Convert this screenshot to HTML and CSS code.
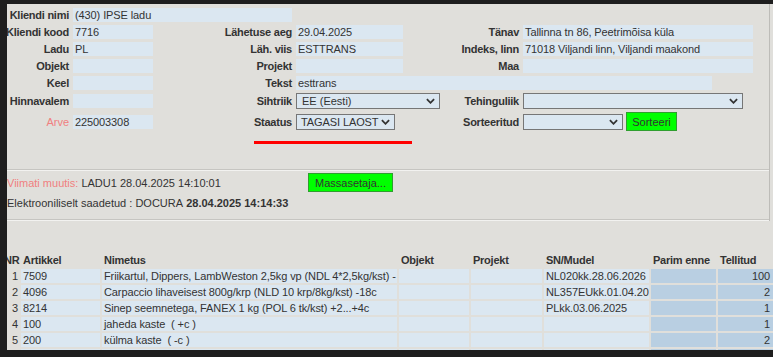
FILE: index.html
```html
<!DOCTYPE html>
<html lang="et">
<head>
  <meta charset="UTF-8" />
  <title>Lähetus</title>
  <link rel="stylesheet" href="styles.css">
</head>
<body>
<div class="screen">
  <div class="doc">
    <div class="head">
      <div class="form">
        <!-- rida 1 -->
        <div class="lbl">Kliendi nimi</div>
        <div class="fld span2">(430) IPSE ladu</div>
        <div class="span3"></div>
        <!-- rida 2 -->
        <div class="lbl">Kliendi kood</div>
        <div class="fld">7716</div>
        <div class="lbl">Lähetuse aeg</div>
        <div class="fld">29.04.2025</div>
        <div class="lbl">Tänav</div>
        <div class="fld">Tallinna tn 86, Peetrimõisa küla</div>
        <!-- rida 3 -->
        <div class="lbl">Ladu</div>
        <div class="fld">PL</div>
        <div class="lbl">Läh. viis</div>
        <div class="fld">ESTTRANS</div>
        <div class="lbl">Indeks, linn</div>
        <div class="fld">71018 Viljandi linn, Viljandi maakond</div>
        <!-- rida 4 -->
        <div class="lbl">Objekt</div>
        <div class="fld"></div>
        <div class="lbl">Projekt</div>
        <div class="fld"></div>
        <div class="lbl">Maa</div>
        <div class="fld"></div>
        <!-- rida 5 -->
        <div class="lbl">Keel</div>
        <div class="fld"></div>
        <div class="lbl">Tekst</div>
        <div class="span3"><div class="fld fld-text">esttrans</div></div>
        <!-- rida 6 -->
        <div class="lbl">Hinnavalem</div>
        <div class="fld"></div>
        <div class="lbl">Sihtriik</div>
        <div class="sel sel-country">EE (Eesti)
          <svg viewBox="0 0 10 6"><polyline points="1,1 5,5 9,1"/></svg>
        </div>
        <div class="lbl">Tehinguliik</div>
        <div class="sel sel-deal">
          <svg viewBox="0 0 10 6"><polyline points="1,1 5,5 9,1"/></svg>
        </div>
        <!-- rida 7 -->
        <div class="lbl lbl-warn">Arve</div>
        <div class="fld">225003308</div>
        <div class="lbl">Staatus</div>
        <div class="sel sel-status">TAGASI LAOST
          <svg viewBox="0 0 10 6"><polyline points="1,1 5,5 9,1"/></svg>
        </div>
        <div class="lbl">Sorteeritud</div>
        <div class="sort">
          <div class="sel sel-sort">
            <svg viewBox="0 0 10 6"><polyline points="1,1 5,5 9,1"/></svg>
          </div>
          <button class="btn btn-sort">Sorteeri</button>
        </div>
      </div>

      <div class="mark"></div>
      <div class="rule"></div>

      <div class="meta-row">
        <div class="meta-text"><span class="warn">Viimati muutis:</span> LADU1 28.04.2025 14:10:01</div>
        <button class="btn btn-mass">Massasetaja...</button>
      </div>
      <div class="meta-row meta-second">
        Elektrooniliselt saadetud : DOCURA&nbsp;<b>28.04.2025 14:14:33</b>
      </div>
      <div class="rule rule-low"></div>
    </div>

    <div class="rows">
      <div class="th nr">NR</div>
      <div class="th">Artikkel</div>
      <div class="th">Nimetus</div>
      <div class="th">Objekt</div>
      <div class="th">Projekt</div>
      <div class="th">SN/Mudel</div>
      <div class="th">Parim enne</div>
      <div class="th">Tellitud</div>

      <div class="nr">1</div>
      <div class="td">7509</div>
      <div class="td">Friikartul, Dippers, LambWeston 2,5kg vp (NDL 4*2,5kg/kst) - 18c</div>
      <div class="td"></div>
      <div class="td"></div>
      <div class="td">NL020kk.28.06.2026</div>
      <div class="td dark"></div>
      <div class="td dark num">100</div>

      <div class="nr">2</div>
      <div class="td">4096</div>
      <div class="td">Carpaccio lihaveisest 800g/krp (NLD 10 krp/8kg/kst) -18c</div>
      <div class="td"></div>
      <div class="td"></div>
      <div class="td">NL357EUkk.01.04.2026</div>
      <div class="td dark"></div>
      <div class="td dark num">2</div>

      <div class="nr">3</div>
      <div class="td">8214</div>
      <div class="td">Sinep seemnetega, FANEX 1 kg (POL 6 tk/kst) +2...+4c</div>
      <div class="td"></div>
      <div class="td"></div>
      <div class="td">PLkk.03.06.2025</div>
      <div class="td dark"></div>
      <div class="td dark num">1</div>

      <div class="nr">4</div>
      <div class="td">100</div>
      <div class="td">jaheda kaste&nbsp; ( +c )</div>
      <div class="td"></div>
      <div class="td"></div>
      <div class="td"></div>
      <div class="td dark"></div>
      <div class="td dark num">1</div>

      <div class="nr">5</div>
      <div class="td">200</div>
      <div class="td">külma kaste&nbsp; ( -c )</div>
      <div class="td"></div>
      <div class="td"></div>
      <div class="td"></div>
      <div class="td dark"></div>
      <div class="td dark num">2</div>

      <div class="nr"></div>
      <div class="td"></div>
      <div class="td"></div>
      <div class="td"></div>
      <div class="td"></div>
      <div class="td"></div>
      <div class="td dark"></div>
      <div class="td dark"></div>
    </div>
  </div>
</div>
</body>
</html>
```

FILE: styles.css
```css
* {
  box-sizing: border-box;
}

body {
  margin: 0;
  background: #1e1e1e;
  font-family: "Liberation Sans", Arial, sans-serif;
  font-size: 11px;
  color: #333;
}

.screen {
  padding: 4px 0 0 7px;
  height: 357px;
  overflow: hidden;
}

.doc {
  background: #e0dfdb;
  height: 346px;
  overflow: hidden;
}

.head {
  padding-top: 4px;
  margin-right: 3px;
  border-right: 1px solid #bdbcb8;
}

/* ülemine vorm */
.form {
  display: grid;
  grid-template-columns: 62px 80px 135px 107px 112px 230px;
  grid-template-rows: repeat(5, 14px) 16px 19px;
  gap: 3px 4px;
}

.lbl {
  display: flex;
  justify-content: flex-end;
  align-items: center;
  font-weight: bold;
  letter-spacing: -0.25px;
  white-space: nowrap;
}

.lbl-warn {
  color: #f08080;
  font-weight: normal;
  letter-spacing: 0;
}

.fld {
  background: #dbe7f1;
  height: 14px;
  line-height: 14px;
  padding-left: 2px;
  letter-spacing: -0.1px;
  white-space: nowrap;
  overflow: hidden;
  align-self: center;
}

.span2 {
  grid-column: span 2;
}

.span3 {
  grid-column: span 3;
}

.fld-text {
  width: 416px;
}

.sel {
  display: flex;
  align-items: center;
  height: 16px;
  border: 1px solid #767676;
  background: #dbe7f1;
  padding: 0 4px 0 5px;
  align-self: center;
  justify-self: start;
  white-space: nowrap;
}

.sel svg {
  flex: none;
  width: 9px;
  height: 6px;
  margin-left: auto;
  fill: none;
  stroke: #333;
  stroke-width: 2;
}

.sel-country { width: 144px; }
.sel-deal { width: 220px; }
.sel-status { width: 99px; padding-left: 4px; letter-spacing: -0.1px; }
.sel-sort { width: 100px; }

.sort {
  display: flex;
  align-items: center;
  gap: 3px;
}

.btn {
  background: #00ff00;
  border: 1px solid #2f9e2f;
  color: #333;
  font: inherit;
  height: 19px;
  padding: 0;
}

.btn-sort { width: 51px; }
.btn-mass { width: 85px; }

.mark {
  width: 158px;
  height: 3px;
  background: #ff0000;
  margin: 10px 0 0 247px;
}

.rule {
  border-top: 1px solid #c6c5c1;
  border-bottom: 1px solid #f2f2f0;
  margin-top: 25px;
}

.rule-low {
  margin-top: 7px;
}

/* muutja info */
.meta-row {
  display: flex;
  align-items: center;
  height: 19px;
  margin-top: 2px;
  white-space: nowrap;
}

.meta-second {
  height: 18px;
}

.meta-text {
  width: 301px;
}

.warn {
  color: #f08080;
}

/* read */
.rows {
  display: grid;
  grid-template-columns: 15px 79px 295px 70px 71px 105px 65px 55px;
  grid-auto-rows: 14px;
  gap: 2px;
  margin: 32px 0 0 -3px;
}

.rows > div {
  line-height: 14px;
  white-space: nowrap;
  overflow: hidden;
  padding-left: 2px;
}

.th {
  font-weight: bold;
  letter-spacing: -0.25px;
}

.rows > .nr {
  text-align: right;
  padding: 0 1px 0 0;
  overflow: visible;
}

.td {
  background: #dbe7f1;
  letter-spacing: -0.1px;
}

.td.dark {
  background: #b9cfe2;
}

.rows > .num {
  text-align: right;
  padding-right: 3px;
}
```
